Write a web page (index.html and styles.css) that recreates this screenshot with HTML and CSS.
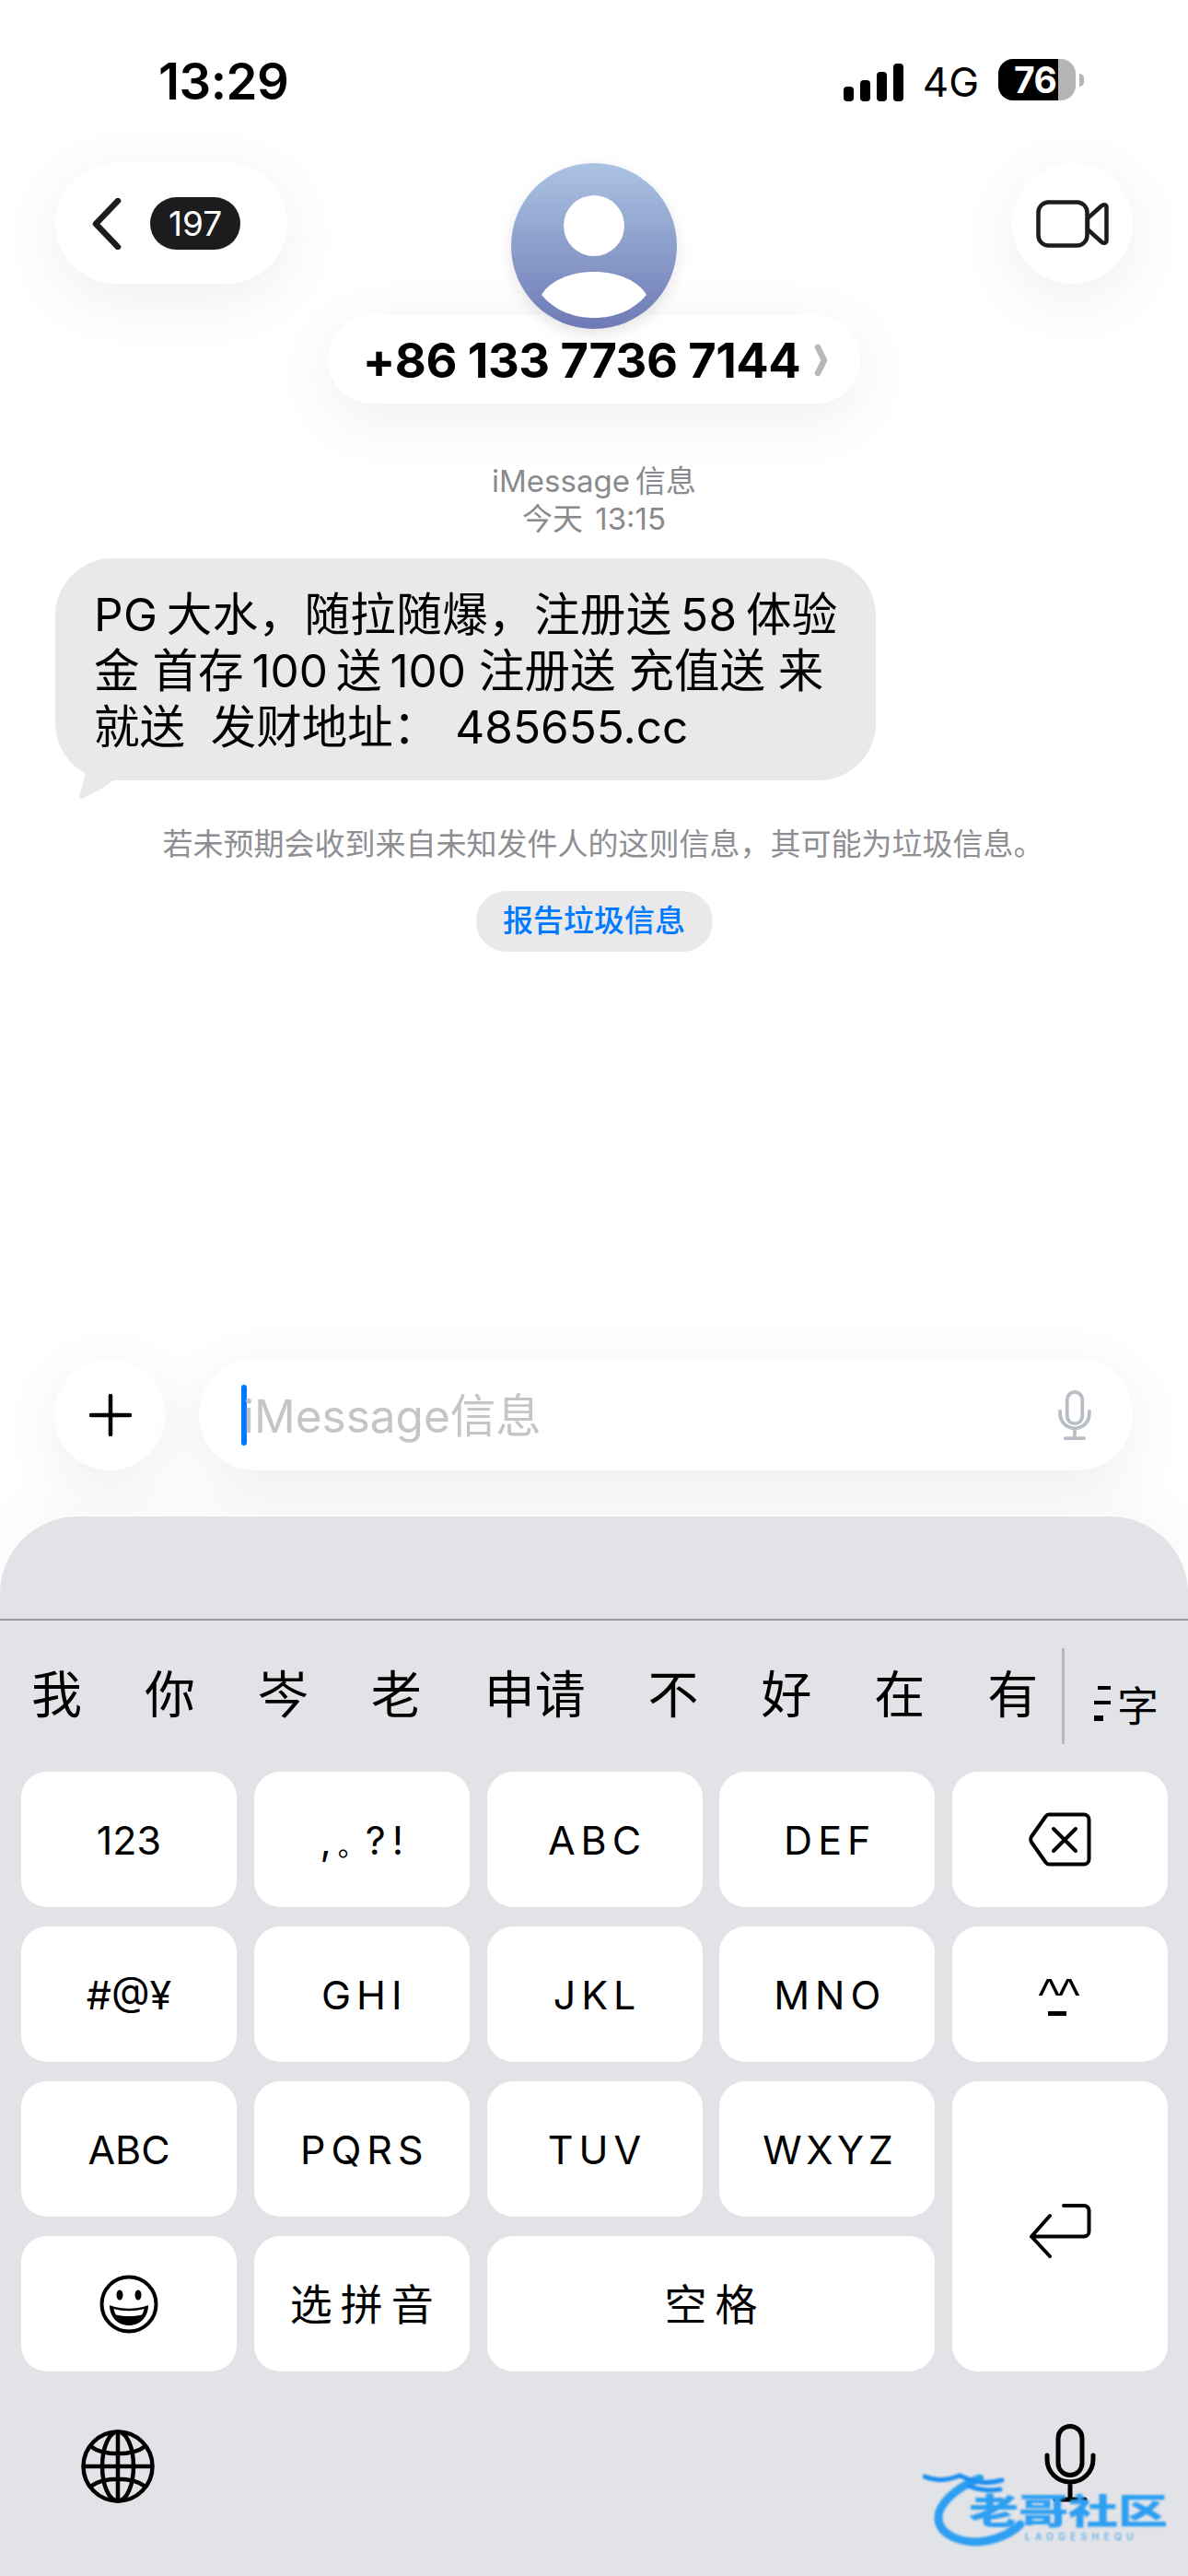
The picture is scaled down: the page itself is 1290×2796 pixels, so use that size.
FILE: index.html
```html
<!doctype html>
<html lang="zh-CN">
<head>
    <meta charset="UTF-8">
    <title>iMessage</title>
    <link rel="stylesheet" href="styles.css">
</head>
<body>
<div class="page">
    <div class="status-bar">
        <div class="time">13:29</div>
        <div class="status-right">
            <svg class="signal" width="65" height="41" viewBox="0 0 65 41">
                <rect x="0" y="25" width="11" height="16" rx="4"/>
                <rect x="18" y="18" width="11" height="23" rx="4"/>
                <rect x="36" y="9" width="11" height="32" rx="4"/>
                <rect x="54" y="0" width="11" height="41" rx="4"/>
            </svg>
            <div class="network">4G</div>
            <div class="battery">76</div>
            <div class="battery-nub"></div>
        </div>
    </div>

    <div class="nav">
        <div class="back-pill glass">
            <svg width="32" height="56" viewBox="0 0 32 56" fill="none" stroke="#1c1c1e" stroke-width="6.500" stroke-linecap="round" stroke-linejoin="round">
                <polyline points="28,3 4,28 28,53"/>
            </svg>
            <div class="badge">197</div>
        </div>
        <div class="contact">
            <svg class="avatar" width="180" height="180" viewBox="0 0 180 180">
                <defs>
                    <linearGradient id="avatarFill" x1="0" y1="0" x2="0" y2="1">
                        <stop offset="0" stop-color="#abc3e2"/>
                        <stop offset="1" stop-color="#6e7ab6"/>
                    </linearGradient>
                </defs>
                <circle cx="90" cy="90" r="90" fill="url(#avatarFill)"/>
                <circle cx="90" cy="68" r="33" fill="#fff"/>
                <path d="M33 143C42 128 64 118 90 118C116 118 138 128 147 143C133 160 112 168 90 168C68 168 47 160 33 143Z" fill="#fff"/>
            </svg>
            <div class="name-pill glass">
                <span class="name">+86 133 7736 7144</span>
                <svg width="15" height="36" viewBox="0 0 15 36" fill="none" stroke="#b8b8b8" stroke-width="6.500" stroke-linecap="round" stroke-linejoin="round">
                    <polyline points="4,4 11,18 4,32"/>
                </svg>
            </div>
        </div>
        <div class="video-btn glass">
            <svg width="79" height="52" viewBox="0 0 79 52" fill="none" stroke="#1c1c1e" stroke-width="4.500" stroke-linejoin="round">
                <rect x="2.500" y="2.500" width="53" height="47" rx="11"/>
                <path d="M56 20L71 6.500C74 4 76.500 5.500 76.500 8V44C76.500 46.500 74 48 71 45.500L56 32Z"/>
            </svg>
        </div>
    </div>

    <div class="thread">
        <div class="thread-meta">
            <div>iMessage&thinsp;信息</div>
            <div>今天 13:15</div>
        </div>
        <div class="bubble">
            <span class="line-first">PG&thinsp;大水，随拉随爆，注册送&thinsp;58&thinsp;体验</span><br>
            金 首存&thinsp;100&thinsp;送&thinsp;100 注册送 充值送 来<br>
            就送&nbsp; 发财地址：&thinsp;&thinsp;485655.cc
            <svg class="bubble-tail" width="50" height="40" viewBox="0 0 50 40">
                <path d="M10 0C12 12 8 24 5 33C3 39 7 40 11 37C22 32 32 26 41 19L50 0Z" fill="#e9e9eb"/>
            </svg>
        </div>
        <div class="notice">若未预期会收到来自未知发件人的这则信息，其可能为垃圾信息。</div>
        <div class="report-btn">报告垃圾信息</div>
    </div>

    <div class="composer">
        <div class="plus-btn glass">
            <svg width="46" height="46" viewBox="0 0 46 46" stroke="#000" stroke-width="4.500" stroke-linecap="round">
                <path d="M23 2V44M2 23H44"/>
            </svg>
        </div>
        <div class="input glass">
            <div class="caret"></div>
            <div class="placeholder">iMessage信息</div>
            <svg class="input-mic" width="36" height="54" viewBox="0 0 56 85" fill="none" stroke="#b9bdc5" stroke-width="6" stroke-linecap="round">
                <rect x="15" y="3" width="26" height="54" rx="13"/>
                <path d="M3 36V40C3 54 14 65 28 65C42 65 53 54 53 40V36M28 65V82M12 82H44"/>
            </svg>
        </div>
    </div>

    <div class="keyboard">
        <div class="kb-top"></div>
        <div class="candidates">
            <div class="cand-list">
                <span>我</span><span>你</span><span>岑</span><span>老</span><span>申请</span><span>不</span><span>好</span><span>在</span><span>有</span>
            </div>
            <div class="cand-more"><i class="dashes"></i>字</div>
        </div>
        <div class="keys">
            <div class="key">123</div>
            <div class="key punct">,<span class="stop">。</span>?!</div>
            <div class="key spaced">ABC</div>
            <div class="key spaced">DEF</div>
            <div class="key">
                <svg width="68" height="59" viewBox="0 0 68 59" fill="none" stroke="#000" stroke-width="4" stroke-linecap="round" stroke-linejoin="round">
                    <path d="M22 2.500H60C63 2.500 65.500 5 65.500 8V51C65.500 54 63 56.500 60 56.500H22C20.500 56.500 19.500 56 18.500 54.500L3 32.500C2 31 2 28 3 26.500L18.500 4.500C19.500 3 20.500 2.500 22 2.500Z"/>
                    <path d="M27 18L51 42M51 18L27 42"/>
                </svg>
            </div>
            <div class="key">#@¥</div>
            <div class="key spaced">GHI</div>
            <div class="key spaced">JKL</div>
            <div class="key spaced">MNO</div>
            <div class="key"><span class="kaomoji">^^</span></div>
            <div class="key">ABC</div>
            <div class="key spaced">PQRS</div>
            <div class="key spaced">TUV</div>
            <div class="key spaced tight">WXYZ</div>
            <div class="key key-return">
                <svg width="68" height="60" viewBox="0 0 68 60" fill="none" stroke="#000" stroke-width="4" stroke-linecap="round" stroke-linejoin="round">
                    <path d="M38 3H60C63 3 65.500 5.500 65.500 8V31C65.500 34 63 36.500 60 36.500H3M23 14L3 36.500L23 58"/>
                </svg>
            </div>
            <div class="key">
                <svg width="64" height="64" viewBox="0 0 64 64">
                    <circle cx="32" cy="32" r="29.500" fill="none" stroke="#000" stroke-width="4"/>
                    <ellipse cx="22" cy="22" rx="3.500" ry="5.500"/>
                    <ellipse cx="42" cy="22" rx="3.500" ry="5.500"/>
                    <path d="M11 33C24 38 40 38 53 33C53 46 44 55 32 55C20 55 11 46 11 33Z"/>
                    <path d="M15.500 37C26 40 38 40 48.500 37C48 40 47 42 46 43.500C36 45.500 28 45.500 18 43.500C17 42 16 40 15.500 37Z" fill="#fff"/>
                </svg>
            </div>
            <div class="key wide-cn">选拼音</div>
            <div class="key wide-cn key-space">空格</div>
        </div>
        <div class="kb-bottom">
            <svg width="80" height="80" viewBox="0 0 80 80" fill="none" stroke="#000" stroke-width="4.500">
                <circle cx="40" cy="40" r="37.500"/>
                <ellipse cx="40" cy="40" rx="17" ry="37.500"/>
                <path d="M40 2.500V77.500M2.500 40H77.500M10 18C24 29 56 29 70 18M10 62C24 51 56 51 70 62"/>
            </svg>
            <svg class="kb-mic" width="56" height="85" viewBox="0 0 56 85" fill="none" stroke="#000" stroke-width="5" stroke-linecap="round">
                <rect x="15" y="2.500" width="26" height="53" rx="13"/>
                <path d="M3 34V38C3 52 14 63 28 63C42 63 53 52 53 38V34M28 63V82M12 82H44"/>
            </svg>
        </div>
    </div>

    <div class="watermark">
        <svg width="270" height="85" viewBox="0 0 270 85" fill="none" stroke="#2f9ff2" stroke-linecap="round">
            <path d="M62 8C36 18 16 36 17 52C18 70 44 80 68 76C84 73 98 66 106 58" stroke-width="9"/>
            <path d="M2 6C16 12 28 10 40 5C60 14 70 14 86 10M50 16C58 20 72 22 84 20" stroke="#1e8ff0" stroke-width="5"/>
        </svg>
        <div class="wm-title">老哥社区</div>
        <div class="wm-sub">LAOGESHEQU</div>
    </div>
</div>
</body>
</html>
```

FILE: styles.css
```css
* {
    box-sizing: border-box;
}
html, body {
    margin: 0;
    padding: 0;
}
body {
    font-family: Inter, "Noto Sans CJK SC", sans-serif;
    background-color: #fff;
    color: #000;
}
.page {
    position: relative;
    width: 1290px;
    height: 2796px;
    overflow: hidden;
    display: flex;
    flex-direction: column;
}
.glass {
    background-color: #fff;
    box-shadow: 0 16px 70px rgba(0, 0, 0, 0.07);
}

/* status bar */
.status-bar {
    height: 177px;
    flex: none;
    padding: 56px 113px 0 172px;
    display: flex;
    justify-content: space-between;
    align-items: flex-start;
}
.time {
    font-size: 54.500px;
    line-height: 64px;
    font-weight: 600;
    letter-spacing: -0.5px;
}
.status-right {
    display: flex;
    align-items: center;
    height: 61px;
}
.signal {
    fill: #000;
    margin-top: 6px;
}
.network {
    margin: 4px 21px 0 21px;
    font-size: 44px;
    line-height: 50px;
    font-weight: 400;
}
.battery {
    width: 84px;
    height: 45px;
    padding-left: 17px;
    border-radius: 16px;
    background: linear-gradient(90deg, #000 65px, #b4b4b4 65px);
    color: #fff;
    font-size: 39px;
    line-height: 45px;
    font-weight: 700;
    letter-spacing: -0.5px;
}
.battery-nub {
    width: 5px;
    height: 14px;
    margin-left: 4px;
    border-radius: 0 6px 6px 0;
    background-color: #b4b4b4;
}

/* nav */
.nav {
    height: 261px;
    flex: none;
    padding: 0 60px;
    display: grid;
    grid-template-columns: 1fr auto 1fr;
    align-items: start;
}
.back-pill {
    justify-self: start;
    width: 252px;
    height: 131px;
    padding-left: 40px;
    border-radius: 66px;
    display: flex;
    align-items: center;
    gap: 31px;
}
.badge {
    width: 98px;
    height: 57px;
    border-radius: 29px;
    background-color: #1c1c1e;
    color: #fff;
    font-size: 37px;
    line-height: 57px;
    text-align: center;
}
.video-btn {
    justify-self: end;
    width: 131px;
    height: 131px;
    border-radius: 50%;
    display: flex;
    align-items: center;
    justify-content: center;
}
.contact {
    display: flex;
    flex-direction: column;
    align-items: center;
}
.avatar {
    position: relative;
    z-index: 1;
    display: block;
    filter: drop-shadow(0 6px 8px rgba(0, 0, 0, 0.10));
}
.name-pill {
    width: 578px;
    height: 96px;
    margin-top: -15px;
    padding: 2px 0 0 3px;
    border-radius: 48px;
    display: flex;
    align-items: center;
    justify-content: center;
    gap: 15px;
}
.name {
    font-size: 52.400px;
    font-weight: 700;
    letter-spacing: -0.5px;
}

/* thread */
.thread {
    flex: 1;
    display: flex;
    flex-direction: column;
    align-items: center;
    padding: 64px 60px 0;
}
.thread-meta {
    color: #8a8a8e;
    font-size: 33px;
    line-height: 41px;
    word-spacing: 4px;
    text-align: center;
}
.bubble {
    position: relative;
    align-self: flex-start;
    width: 891px;
    height: 241px;
    margin-top: 22px;
    padding: 31px 0 0 42px;
    border-radius: 62px;
    background-color: #e9e9eb;
    font-size: 49.500px;
    line-height: 61px;
    white-space: nowrap;
}
.line-first {
    letter-spacing: 0.4px;
}
.bubble-tail {
    position: absolute;
    left: 22px;
    bottom: -21px;
}
.notice {
    margin-top: 49px;
    padding-left: 20px;
    color: #8e8e93;
    font-size: 33px;
    line-height: 40px;
    white-space: nowrap;
}
.report-btn {
    width: 257px;
    height: 66px;
    margin-top: 31px;
    border-radius: 33px;
    background-color: #e9e9eb;
    color: #007aff;
    font-size: 33px;
    line-height: 64px;
    font-weight: 500;
    text-align: center;
}

/* composer */
.composer {
    flex: none;
    width: 1171px;
    margin: 0 0 50px 59px;
    display: flex;
    gap: 36px;
}
.plus-btn {
    width: 121px;
    height: 121px;
    flex: none;
    border-radius: 50%;
    display: flex;
    align-items: center;
    justify-content: center;
}
.input {
    flex: 1;
    height: 121px;
    padding: 0 45px 0 46px;
    border-radius: 61px;
    display: flex;
    align-items: center;
}
.caret {
    width: 6px;
    height: 66px;
    border-radius: 3px;
    background-color: #007aff;
}
.placeholder {
    flex: 1;
    margin-left: -4px;
    padding-bottom: 4px;
    color: #c5c5c7;
    font-size: 49.500px;
}

/* keyboard */
.keyboard {
    height: 1150px;
    flex: none;
    border-radius: 84px 84px 0 0;
    background-color: #e1e3e7;
    box-shadow: 0 -2px 0 #fdfdfd, 0 -30px 60px rgba(0, 0, 0, 0.025);
}
.kb-top {
    height: 113px;
    border-bottom: 2px solid #9b9b9f;
}
.candidates {
    height: 164px;
    display: flex;
    align-items: center;
}
.cand-list {
    width: 1156px;
    height: 104px;
    padding: 0 0 12px 34px;
    display: flex;
    align-items: center;
    gap: 67.900px;
    border-right: 3px solid #b9b9bd;
    font-size: 55px;
}
.cand-more {
    margin: 16px 0 0 32px;
    display: flex;
    align-items: center;
    gap: 7px;
    font-size: 45px;
}
.dashes {
    width: 18px;
    height: 38px;
    background:
        linear-gradient(#000, #000) 4px 0 / 14px 4px no-repeat,
        linear-gradient(#000, #000) 0 16px / 18px 4px no-repeat,
        linear-gradient(#000, #000) 0 32px / 10px 6px no-repeat;
}
.keys {
    padding: 0 23px;
    display: grid;
    grid-template-columns: repeat(5, 234px);
    grid-auto-rows: 147px;
    column-gap: 18.750px;
    row-gap: 21px;
}
.key {
    border-radius: 28px;
    background-color: #fff;
    display: flex;
    align-items: center;
    justify-content: center;
    font-size: 43px;
}
.spaced {
    letter-spacing: 6px;
    padding-left: 6px;
}
.tight {
    letter-spacing: 4.500px;
}
.punct {
    letter-spacing: 7px;
    padding-left: 7px;
}
.stop {
    font-size: 30px;
    margin-top: 8px;
    letter-spacing: 0;
}
.wide-cn {
    letter-spacing: 9px;
    padding: 0 0 5px 9px;
    font-size: 46px;
}
.key-space {
    grid-column: 3 / 5;
}
.key-return {
    grid-column: 5;
    grid-row: 3 / 5;
    padding-top: 8px;
}
.kaomoji {
    position: relative;
    margin-right: 4px;
    font-family: "Liberation Sans", sans-serif;
    font-size: 50px;
    line-height: 56px;
    letter-spacing: -2px;
}
.kaomoji::after {
    content: "";
    position: absolute;
    left: 10px;
    right: 12px;
    bottom: 5px;
    height: 5px;
    background-color: #000;
}
.kb-bottom {
    padding: 57px 100px 0 88px;
    display: flex;
    justify-content: space-between;
    align-items: flex-start;
}
.kb-bottom svg:first-child {
    margin-top: 6px;
}

/* watermark */
.watermark {
    position: absolute;
    top: 2682px;
    left: 1002px;
    width: 270px;
    height: 85px;
    filter: blur(0.8px);
    color: #2f9ff2;
}
.watermark svg {
    display: block;
}
.wm-title {
    position: absolute;
    top: 24px;
    left: 50px;
    font-size: 54px;
    line-height: 40px;
    font-weight: 900;
    white-space: nowrap;
    transform: scaleY(0.7);
}
.wm-sub {
    position: absolute;
    top: 66px;
    left: 111px;
    font-size: 10px;
    line-height: 10px;
    letter-spacing: 5.500px;
    white-space: nowrap;
}
```
